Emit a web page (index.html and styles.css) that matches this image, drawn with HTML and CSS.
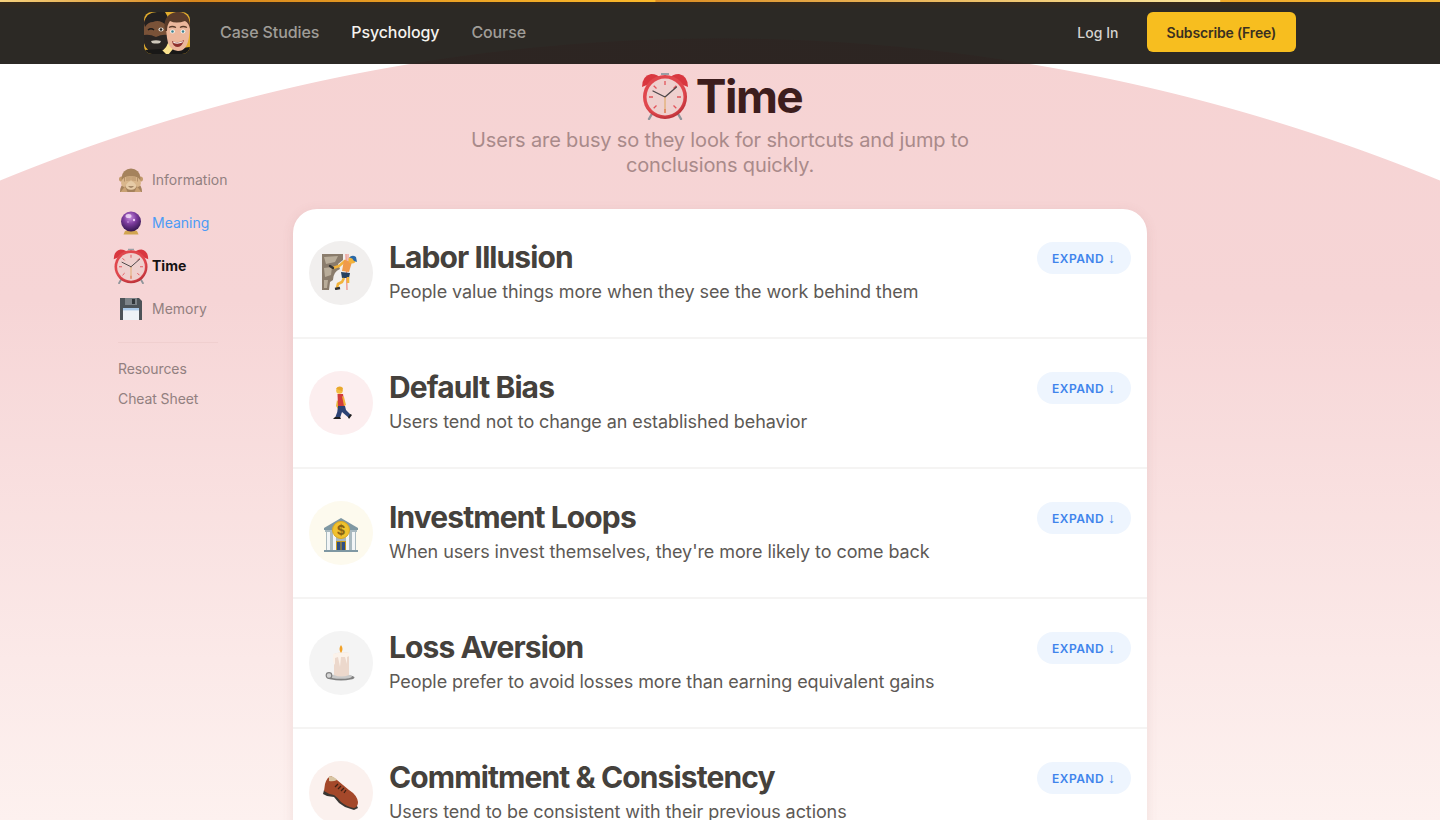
FILE: index.html
```html
<!DOCTYPE html>
<html lang="en">
<head>
<meta charset="utf-8">
<title>Time</title>
<link rel="stylesheet" href="styles.css">
</head>
<body>
<div class="arc"></div>
<header class="topbar">
  <div class="topbar-inner">
    <svg class="logo" viewBox="0 0 48 44" width="48" height="44">
      <defs><clipPath id="logoclip"><rect x="1" y="1" width="46" height="42" rx="8"/></clipPath></defs>
      <g clip-path="url(#logoclip)">
        <rect x="1" y="1" width="46" height="42" fill="#e3ad2e"/>
        <path d="M14 43 L24 30 L34 43Z" fill="#fbe28e"/>
        <path d="M1 10 Q4 3 14 4 Q25 5 25 15 L25 30 Q23 40 13 40 Q2 40 1 30Z" fill="#7a5238"/>
        <path d="M1 12 Q3 1 14 1 L22 1 Q27 8 24 15 Q17 8 10 11 Q5 11 2 16Z" fill="#232020"/>
        <path d="M1 24 Q7 23 13 26 Q19 23 25 24 L25 32 Q22 41 13 41 Q3 41 1 32Z" fill="#2a2523"/>
        <path d="M8 30 Q13 28.500 18 30 L17 32 Q13 33 9 32Z" fill="#cfc7bb"/>
        <path d="M5 19 Q8 16.500 11 19" stroke="#1c1a1a" stroke-width="1.500" fill="none"/>
        <ellipse cx="18" cy="18.500" rx="2.600" ry="1.900" fill="#e6e0d8"/><circle cx="18" cy="18.500" r="1.300" fill="#2a2320"/>
        <path d="M1 39 L18 38 L24 44 L1 44Z" fill="#191817"/>
        <path d="M25 44 L30 38 L47 36 L47 44Z" fill="#191817"/>
        <path d="M23 18 Q23 5 35 4 Q47 4 47 18 L46 26 Q44 40 35 40 Q25 39 24 27Z" fill="#ecb79c"/>
        <path d="M22 20 Q19 4 33 1 Q48 0 47 18 Q46 12 42 10 Q33 13 27 10 Q24 14 24 20Z" fill="#5a3b2a"/>
        <ellipse cx="29.500" cy="20.500" rx="2.400" ry="2" fill="#f6f3ef"/><circle cx="29.500" cy="20.500" r="1.300" fill="#3f7f8c"/>
        <ellipse cx="40" cy="20.500" rx="2.400" ry="2" fill="#f6f3ef"/><circle cx="40" cy="20.500" r="1.300" fill="#3f7f8c"/>
        <path d="M26 16.500 Q29 14.500 33 16.500M37 16.500 Q40 14.500 44 16.500" stroke="#5a3b2a" stroke-width="1.300" fill="none"/>
        <path d="M29 30 Q35 33 41 29 Q39 36 35 36 Q30 36 29 30Z" fill="#8d2f2d"/>
        <path d="M30 30.500 Q35 32.500 40 30 L39.500 31.500 Q35 33.500 30.500 32Z" fill="#f4efe9"/>
      </g>
    </svg>
    <nav class="mainnav">
      <a class="navlink">Case Studies</a>
      <a class="navlink navlink-on">Psychology</a>
      <a class="navlink">Course</a>
    </nav>
    <div class="actions">
      <a class="login">Log In</a>
      <a class="subscribe">Subscribe (Free)</a>
    </div>
  </div>
</header>

<main class="page">
  <section class="hero">
    <h1 class="hero-title">
      <svg class="clock hero-clock" viewBox="0 0 48 48" width="48" height="48"><use href="#clock"/></svg>
      <span>Time</span>
    </h1>
    <p class="hero-sub">Users are busy so they look for shortcuts and jump to conclusions quickly.</p>
  </section>

  <div class="columns">
    <aside class="side">
      <ul class="side-list">
        <li class="side-item">
          <span class="side-ico">
          <svg viewBox="0 0 24 24" width="24" height="24">
            <circle cx="2.600" cy="11" r="2.600" fill="#c29a6c"/><circle cx="21.400" cy="11" r="2.600" fill="#c29a6c"/>
            <ellipse cx="12" cy="10" rx="9.500" ry="9.500" fill="#a5825c"/>
            <path d="M1 24 Q1 17 6 15 L18 15 Q23 17 23 24Z" fill="#a5825c"/>
            <ellipse cx="12" cy="17" rx="5.800" ry="4.800" fill="#e6cba6"/>
            <path d="M9 18 Q12 21 15 18 Q12 19 9 18Z" fill="#6b4a2f"/>
            <path d="M2 15 Q3 8 11.700 8 L11.700 13 Q8 14 6 19 Q2.500 19 2 15ZM22 15 Q21 8 12.300 8 L12.300 13 Q16 14 18 19 Q21.500 19 22 15Z" fill="#d9b68b"/>
            <path d="M5.500 9.500v4M8 8.700v4.300M10 8.500v4.300M14 8.500v4.300M16 8.700v4.300M18.500 9.500v4" stroke="#9a7650" stroke-width=".6"/>
            <path d="M1.500 24 L6 18.500 L8.500 24ZM22.500 24 L18 18.500 L15.500 24Z" fill="#c9a173"/>
          </svg>
          </span>
          <a class="side-link">Information</a>
        </li>
        <li class="side-item">
          <span class="side-ico">
          <svg viewBox="0 0 24 24" width="24" height="24">
            <defs><radialGradient id="orb" cx=".45" cy=".3" r=".72"><stop offset="0" stop-color="#c98fe0"/><stop offset=".45" stop-color="#7d3c9e"/><stop offset="1" stop-color="#2f1349"/></radialGradient></defs>
            <path d="M6 20 Q12 17 18 20 L19.500 23.500 L4.500 23.500Z" fill="#d2a550"/>
            <circle cx="12" cy="10.500" r="10" fill="url(#orb)"/>
            <ellipse cx="9.500" cy="5" rx="3" ry="2" fill="#f0daf6" opacity=".85"/>
            <circle cx="15" cy="9" r="1.200" fill="#ecc9f5"/>
            <circle cx="9" cy="11" r=".8" fill="#d9a8ea"/>
          </svg>
          </span>
          <a class="side-link side-link-blue">Meaning</a>
        </li>
        <li class="side-item">
          <span class="side-ico">
          <svg class="clock" viewBox="0 0 48 48" width="36" height="36">
            <defs>
              <radialGradient id="rim" cx=".45" cy=".4" r=".65"><stop offset=".75" stop-color="#e0474d"/><stop offset="1" stop-color="#a9262d"/></radialGradient>
              <g id="clock">
                <path d="M12 40 L8 47M36 40 L40 47" stroke="#8f959b" stroke-width="2.400" stroke-linecap="round"/>
                <path d="M24 6 L24 2M20 2 L28 2" stroke="#9aa0a6" stroke-width="2"/>
                <path d="M1 15 Q1 4 10 2 Q17 2 20 7Z" fill="#d9373f"/>
                <path d="M47 15 Q47 4 38 2 Q31 2 28 7Z" fill="#d9373f"/>
                <circle cx="24" cy="25" r="22" fill="url(#rim)"/>
                <circle cx="24" cy="25" r="18.500" fill="#efd0ce"/>
                <path d="M24 9v4M24 37v4M8 25h4M36 25h4M12.700 13.700l2.800 2.800M32.500 33.500l2.800 2.800M35.300 13.700l-2.800 2.800M15.500 33.500l-2.800 2.800" stroke="#e2545a" stroke-width="1.300"/>
                <path d="M24 25 L12 19M24 25 L35.500 15" stroke="#4c4648" stroke-width="1.300" stroke-linecap="round"/>
                <path d="M24 25 L24 41" stroke="#dca04c" stroke-width=".9"/>
              </g>
            </defs>
            <use href="#clock"/>
          </svg>
          </span>
          <a class="side-link side-link-on">Time</a>
        </li>
        <li class="side-item">
          <span class="side-ico">
          <svg viewBox="0 0 24 24" width="24" height="24">
            <path d="M1 1 H20 L23 4 V23 H1Z" fill="#4d5358"/>
            <rect x="6" y="1" width="12" height="7" fill="#7d8388"/>
            <rect x="13" y="2" width="3" height="5" fill="#32373b"/>
            <rect x="4" y="11" width="16" height="12" fill="#eef2f6"/>
            <rect x="4" y="11" width="16" height="2.400" fill="#a9c8e8"/>
          </svg>
          </span>
          <a class="side-link">Memory</a>
        </li>
      </ul>
      <div class="side-rule"></div>
      <a class="side-extra">Resources</a>
      <a class="side-extra">Cheat Sheet</a>
    </aside>

    <section class="card">
      <article class="row">
        <span class="disc disc-grey">
          <svg class="shift-up-left" viewBox="0 0 36 36" width="36" height="36">
            <path d="M0 0 H21 V6 L16 10 L18 15 Q11 18 11 26 L8 28 L7 36 H0Z" fill="#8a7c6c"/>
            <path d="M2 3 L16 2 L13 8 L4 10ZM2 14 L10 13 L9 21 L3 23ZM2 26 L6 26 L5 34 L2 34Z" fill="#b9ad9a"/>
            <path d="M24 0 L25 36" stroke="#ee8a80" stroke-width="1.200"/>
            <path d="M26 0 L26 16" stroke="#ee8a80" stroke-width="1"/>
            <path d="M11 14 L17 12 L23 7" stroke="#f2b33a" stroke-width="2.600" fill="none" stroke-linecap="round"/>
            <path d="M8 12 L11 14" stroke="#333" stroke-width="2.400" stroke-linecap="round"/>
            <path d="M22 6 L30 8 L27 18 L20 17Z" fill="#f09a4a"/>
            <path d="M19 18 L28 19 L27 24 L20 24Z" fill="#27415f"/>
            <path d="M22 24 L20 28 L16 30 L15 34" stroke="#f2b33a" stroke-width="2.600" fill="none"/>
            <path d="M26 23 L26 29" stroke="#f2b33a" stroke-width="2.600"/>
            <path d="M13 35 L18 34" stroke="#333" stroke-width="2.400"/>
            <circle cx="30" cy="6" r="3.600" fill="#f2b33a"/>
            <path d="M27 4 Q30 0 34 3 L35 8 L32 7Q30 3 27 4Z" fill="#2a69a8"/>
          </svg>
        </span>
        <div class="row-text">
          <h2 class="row-title">Labor Illusion</h2>
          <p class="row-desc">People value things more when they see the work behind them</p>
        </div>
        <a class="expand">EXPAND <span class="arrow">↓</span></a>
      </article>

      <article class="row">
        <span class="disc disc-rose">
          <svg viewBox="0 0 36 36" width="36" height="36">
            <path d="M14 15 L13 21 L15 24 L16 18Z" fill="#e8b73a"/>
            <path d="M14.500 9 L20 9 L22 21 L15 21Z" fill="#d13c3c"/>
            <path d="M19 11 L21 12 L23 20 L21 21Z" fill="#f2b33a"/>
            <path d="M15 21 L22 21 L23 25 L28 30 L26 33 L19 27 L17 33 L12 33 Q15 27 15 21Z" fill="#2c4274"/>
            <path d="M10 34 L18 34 L17 32 L12 32Z M26 34 L29 30 L27.500 29 L25 32Z" fill="#1f1f1f"/>
            <circle cx="16.500" cy="5.500" r="3.300" fill="#f2bd3f"/>
            <path d="M13 3.500 Q16 0 20 3 L19 6 Q16 5 13 3.500Z" fill="#e9a82b"/>
          </svg>
        </span>
        <div class="row-text">
          <h2 class="row-title">Default Bias</h2>
          <p class="row-desc">Users tend not to change an established behavior</p>
        </div>
        <a class="expand">EXPAND <span class="arrow">↓</span></a>
      </article>

      <article class="row">
        <span class="disc disc-cream">
          <svg class="shift-down" viewBox="0 0 36 36" width="36" height="36">
            <path d="M1 11 L18 1 L35 11 L35 13 L1 13Z" fill="#7f98a3"/>
            <rect x="2" y="13" width="32" height="2" fill="#a7b8bf"/>
            <rect x="3" y="15" width="30" height="18" fill="#a9b9bf"/>
            <rect x="4" y="15" width="3" height="18" fill="#f2f5f6"/><rect x="10" y="15" width="3" height="18" fill="#f2f5f6"/>
            <rect x="23" y="15" width="3" height="18" fill="#f2f5f6"/><rect x="29" y="15" width="3" height="18" fill="#f2f5f6"/>
            <rect x="13" y="24" width="10" height="10" fill="#c69a1d"/>
            <rect x="14" y="25" width="3.500" height="9" fill="#2e4f84"/><rect x="18.500" y="25" width="3.500" height="9" fill="#2e4f84"/>
            <rect x="1" y="33" width="34" height="2" fill="#7f98a3"/>
            <circle cx="18" cy="13" r="8.500" fill="#f0c22e" stroke="#dca81f" stroke-width="1"/>
            <text class="dollar" x="18" y="17.500" text-anchor="middle">$</text>
          </svg>
        </span>
        <div class="row-text">
          <h2 class="row-title">Investment Loops</h2>
          <p class="row-desc">When users invest themselves, they're more likely to come back</p>
        </div>
        <a class="expand">EXPAND <span class="arrow">↓</span></a>
      </article>

      <article class="row">
        <span class="disc disc-smoke">
          <svg viewBox="0 0 36 36" width="36" height="36">
            <ellipse cx="18" cy="32.500" rx="13.500" ry="3" fill="#7f7f7f"/>
            <ellipse cx="18" cy="31.500" rx="11" ry="2.300" fill="#c9c9c9"/>
            <circle cx="6" cy="30.500" r="2.800" fill="#d4d4d4" stroke="#808080" stroke-width="1.200"/>
            <path d="M11 9 Q18 6 26 8 L26 30 Q18 33 11 30Z" fill="#ecd8cc"/>
            <path d="M10 9 Q18 6 26.500 8 L26.500 11 L24 12 L24 19 L22 12 L18 12 L17 22 L15 12 L12 13 L12 20 L10 17Z" fill="#fbf2ea"/>
            <path d="M18 8 Q15 4 18 0 Q21 4 18 8Z" fill="#f2a228"/>
          </svg>
        </span>
        <div class="row-text">
          <h2 class="row-title">Loss Aversion</h2>
          <p class="row-desc">People prefer to avoid losses more than earning equivalent gains</p>
        </div>
        <a class="expand">EXPAND <span class="arrow">↓</span></a>
      </article>

      <article class="row">
        <span class="disc disc-blush">
          <svg viewBox="0 0 36 36" width="36" height="36">
            <path d="M1 15 L0 19 L4 21 L11 22 L16 28 L22 32 L31 35 L35 33 L33 29Z" fill="#3a3632"/>
            <path d="M2 9 Q4 2 8 1 L14 5 L20 10 L26 15 Q34 20 35 27 Q35 32 31 33 Q24 32 18 27 Q14 22 11 20 Q5 19 1 16Z" fill="#a4482a"/>
            <path d="M6 1 Q11 1 14 5 Q10 7 6 6Z" fill="#d8c5a3"/>
            <path d="M15 9 L12 12M18 11 L15 14M21 13 L18 16M23 15 L21 18" stroke="#3e2013" stroke-width="1.300"/>
          </svg>
        </span>
        <div class="row-text">
          <h2 class="row-title">Commitment &amp; Consistency</h2>
          <p class="row-desc">Users tend to be consistent with their previous actions</p>
        </div>
        <a class="expand">EXPAND <span class="arrow">↓</span></a>
      </article>
    </section>
  </div>
</main>
</body>
</html>
```
FILE: styles.css
```css
* { box-sizing: border-box; }
html, body { margin: 0; height: 820px; overflow: hidden; }
body {
  position: relative;
  background: #fff;
  font-family: "Inter", "Liberation Sans", sans-serif;
  color: #3f3b37;
}
.arc {
  position: absolute;
  left: 0;
  top: 0;
  width: 1440px;
  height: 820px;
  background: linear-gradient(180deg, #f6d3d3 38px, #f6d5d6 300px, #fbe9e8 660px, #fdf1ef 820px);
  -webkit-mask-image: radial-gradient(circle 1896px at 720px 1934px, #000 99.95%, transparent 100%);
  mask-image: radial-gradient(circle 1896px at 720px 1934px, #000 99.95%, transparent 100%);
}
.topbar {
  position: relative;
  z-index: 2;
  height: 64px;
  background:
    radial-gradient(circle 1896px at 720px 1932px, rgba(50, 24, 24, .22) 99.95%, transparent 100%),
    linear-gradient(180deg, #37291b 0, #2c2925 8px);
  border-top: 2px solid;
  border-image: linear-gradient(90deg, #f7d27e 0, #d9861c 195px, #fdb92a 655px, #dd8c20 656px, #fde9a0 1219px, #f0aa2a 1220px, #f7b733 1440px) 1;
}
.topbar-inner {
  height: 60px;
  display: flex;
  align-items: center;
  padding: 0 144px 0 143px;
}
.logo { flex: none; margin-top: 1px; }
.mainnav { display: flex; gap: 32px; margin-left: 29px; }
.navlink { font-size: 16px; font-weight: 500; letter-spacing: -.1px; color: #a09d98; }
.navlink-on { color: #f5f3ef; }
.actions { margin-left: auto; display: flex; align-items: center; gap: 28px; }
.login { font-size: 14px; font-weight: 500; letter-spacing: .05px; color: #d6d4d0; }
.subscribe {
  display: flex;
  align-items: center;
  height: 40px;
  padding: 0 20px;
  border-radius: 6px;
  background: #f7be1f;
  color: #3a3020;
  font-size: 14px;
  font-weight: 600;
  letter-spacing: -.18px;
}
.page { position: relative; z-index: 1; height: 756px; overflow: hidden; }
.hero { text-align: center; padding-top: 3px; }
.hero-title {
  display: flex;
  justify-content: center;
  align-items: center;
  gap: 7px;
  margin: 0;
  height: 58px;
  padding-left: 3px;
  font-size: 46px;
  font-weight: 700;
  letter-spacing: -1.5px;
  color: #3d1d1d;
}
.hero-sub {
  width: 520px;
  margin: 3px auto 0;
  font-size: 20px;
  line-height: 25px;
  letter-spacing: -.15px;
  color: #a98a8a;
}
.columns { display: flex; margin-top: 31px; padding-left: 114px; align-items: flex-start; }
.side { width: 179px; flex: none; margin-top: -51px; }
.side-list { list-style: none; margin: 0; padding: 0; }
.side-item { display: flex; align-items: center; height: 43px; }
.side-ico { width: 34px; margin-right: 4px; display: flex; justify-content: center; flex: none; }
.side-ico svg { flex: none; }
.side-link { font-size: 14px; color: #928080; }
.side-link-blue { color: #4c9bf5; }
.side-link-on { color: #151212; font-weight: 700; }
.side-rule { width: 100px; height: 1px; margin: 12px 0 11px 4px; background: #f0cfcf; }
.side-extra { display: block; margin-left: 4px; font-size: 14px; line-height: 30px; letter-spacing: -.1px; color: #928080; }
.card {
  width: 854px;
  flex: none;
  background: #fff;
  border-radius: 24px;
  box-shadow: 0 2px 12px rgba(150, 90, 90, .12);
}
.row {
  display: flex;
  align-items: flex-start;
  height: 130px;
  padding: 32px 16px 0 16px;
  border-bottom: 2px solid #f5f4f3;
}
.disc {
  flex: none;
  width: 64px;
  height: 64px;
  border-radius: 50%;
  display: flex;
  align-items: center;
  justify-content: center;
}
.shift-up-left { margin: -2px 3px 0 0; }
.shift-down { margin-top: 3px; }
.disc-grey { background: #f1efee; }
.disc-rose { background: #fceeef; }
.disc-cream { background: #fdfaee; }
.disc-smoke { background: #f4f4f4; }
.disc-blush { background: #fbf1ee; }
.row-text { flex: 1; padding-left: 16px; }
.row-title {
  margin: 0;
  font-size: 30px;
  line-height: 32px;
  font-weight: 700;
  letter-spacing: -.9px;
  color: #45413c;
}
.row-desc { margin: 11px 0 0; font-size: 18px; line-height: 16px; letter-spacing: -.085px; color: #5d5955; }
.expand {
  flex: none;
  display: flex;
  align-items: center;
  gap: 4px;
  height: 32px;
  margin-top: 1px;
  padding: 0 16px 0 15px;
  border-radius: 16px;
  background: #eef5fe;
  color: #3f84ec;
  font-size: 12px;
  font-weight: 600;
  letter-spacing: .45px;
}
.arrow { font-family: "Liberation Sans", sans-serif; font-size: 14px; font-weight: 400; letter-spacing: 0; }
.dollar { font-size: 13px; font-weight: 700; fill: #8a6414; }
```
